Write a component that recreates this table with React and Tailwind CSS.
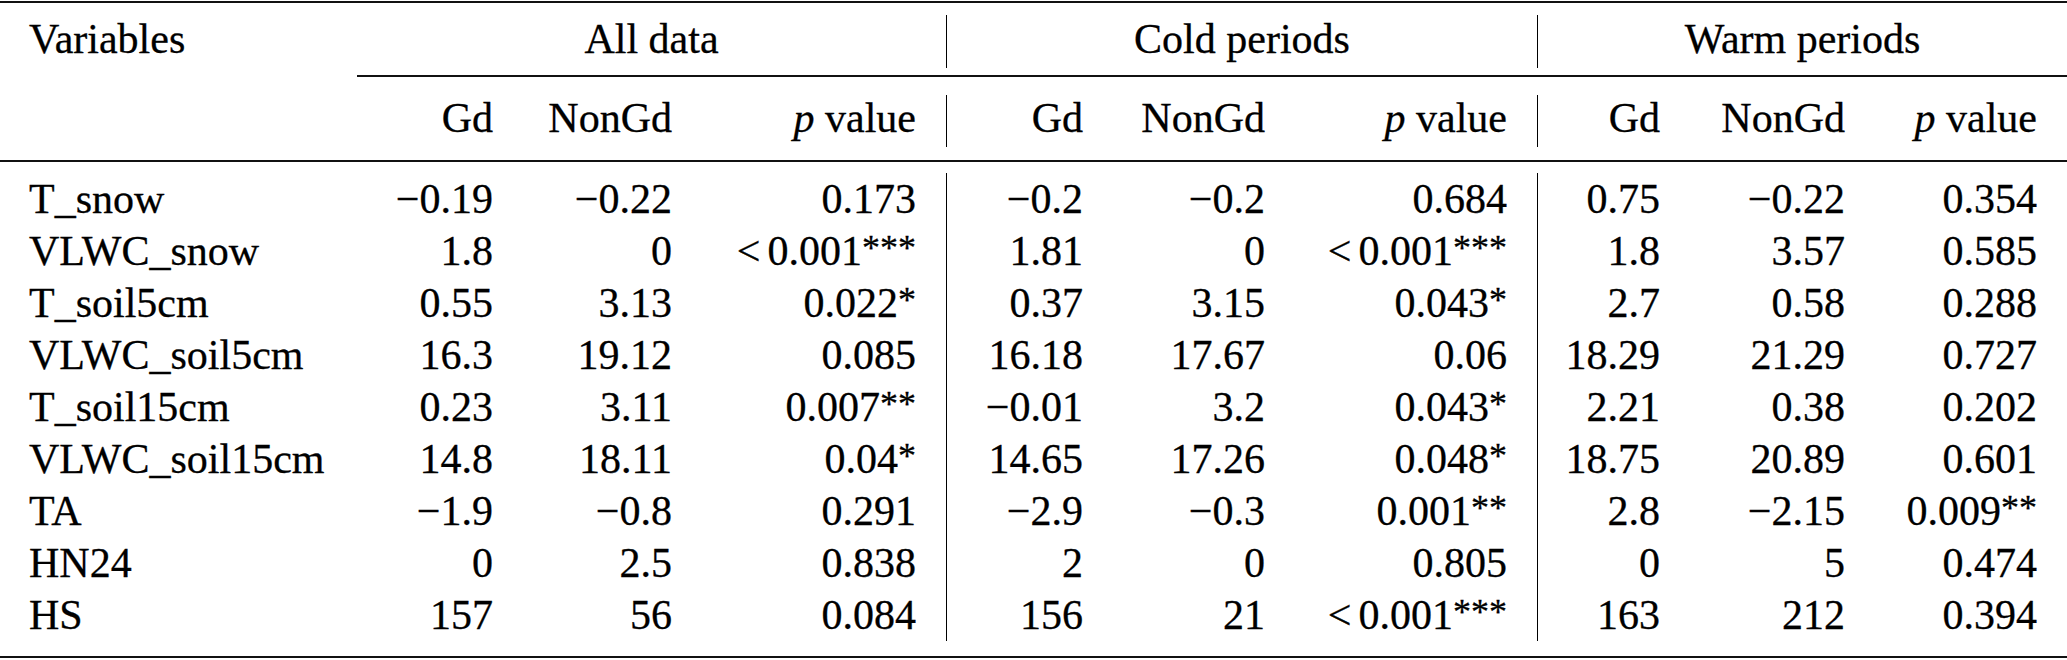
import React from "react";

const COLS =
  "grid grid-cols-[357px_166px_179px_245px_166px_182px_243px_152px_185px_192px]";

const rows = [
  ["T_snow", "−0.19", "−0.22", "0.173", "−0.2", "−0.2", "0.684", "0.75", "−0.22", "0.354"],
  ["VLWC_snow", "1.8", "0", "<0.001***", "1.81", "0", "<0.001***", "1.8", "3.57", "0.585"],
  ["T_soil5cm", "0.55", "3.13", "0.022*", "0.37", "3.15", "0.043*", "2.7", "0.58", "0.288"],
  ["VLWC_soil5cm", "16.3", "19.12", "0.085", "16.18", "17.67", "0.06", "18.29", "21.29", "0.727"],
  ["T_soil15cm", "0.23", "3.11", "0.007**", "−0.01", "3.2", "0.043*", "2.21", "0.38", "0.202"],
  ["VLWC_soil15cm", "14.8", "18.11", "0.04*", "14.65", "17.26", "0.048*", "18.75", "20.89", "0.601"],
  ["TA", "−1.9", "−0.8", "0.291", "−2.9", "−0.3", "0.001**", "2.8", "−2.15", "0.009**"],
  ["HN24", "0", "2.5", "0.838", "2", "0", "0.805", "0", "5", "0.474"],
  ["HS", "157", "56", "0.084", "156", "21", "<0.001***", "163", "212", "0.394"],
];

function Value({ v }) {
  const lt = v.startsWith("<");
  const m = v.match(/\*+$/);
  const stars = m ? m[0] : "";
  const num = v.replace(/^</, "").replace(/\*+$/, "");
  return (
    <>
      {lt && <span className="mr-[7px]">&lt;</span>}
      <span>{num}</span>
      {stars && (
        <span className="relative -top-[5px] text-[36px] leading-none">{stars}</span>
      )}
    </>
  );
}

function PValue() {
  return (
    <>
      <span className="italic">p</span> value
    </>
  );
}

export default function App() {
  return (
    <div className="w-[2067px] h-[660px] bg-white text-black font-[family-name:'Liberation_Serif','Times_New_Roman',serif] text-[42px] [-webkit-text-stroke:0.3px_black] overflow-hidden">
      <div className="h-[1px]" />
      <div className="h-[2px] bg-[#111]" />

      {/* header row 1 */}
      <div className={`${COLS} h-[72px] items-start`}>
        <div className="mt-[12px] h-[53px] leading-[48px] pl-[29px] whitespace-nowrap">
          Variables
        </div>
        <div className="col-span-3 mt-[12px] h-[53px] leading-[48px] text-center border-r border-black">
          All data
        </div>
        <div className="col-span-3 mt-[12px] h-[53px] leading-[48px] text-center border-r border-black">
          Cold periods
        </div>
        <div className="col-span-3 mt-[12px] h-[53px] leading-[48px] text-center">
          Warm periods
        </div>
      </div>

      {/* partial rule */}
      <div className={`${COLS} h-[2px]`}>
        <div className="col-start-2 col-span-9 bg-[#111]" />
      </div>

      {/* header row 2 */}
      <div className={`${COLS} h-[83px] items-start`}>
        <div className="mt-[18px] h-[52px]" />
        {[0, 1, 2].map((g) => (
          <React.Fragment key={g}>
            <div className="mt-[18px] h-[52px] leading-[46px] text-right pr-[30px]">Gd</div>
            <div className="mt-[18px] h-[52px] leading-[46px] text-right pr-[30px]">NonGd</div>
            <div
              className={`mt-[18px] h-[52px] leading-[46px] text-right pr-[30px] whitespace-nowrap ${
                g < 2 ? "border-r border-black" : ""
              }`}
            >
              <PValue />
            </div>
          </React.Fragment>
        ))}
      </div>

      <div className="h-[2px] bg-[#111]" />

      {/* body */}
      <div className="pt-[11px] pb-[15px]">
        {rows.map((r) => (
          <div key={r[0]} className={`${COLS} h-[52px] leading-[52px]`}>
            <div className="pl-[29px] whitespace-nowrap">{r[0]}</div>
            {r.slice(1).map((v, i) => (
              <div
                key={i}
                className={`text-right pr-[30px] whitespace-nowrap ${
                  i === 2 || i === 5 ? "border-r border-black" : ""
                }`}
              >
                <Value v={v} />
              </div>
            ))}
          </div>
        ))}
      </div>

      <div className="h-[2px] bg-[#111]" />
    </div>
  );
}
